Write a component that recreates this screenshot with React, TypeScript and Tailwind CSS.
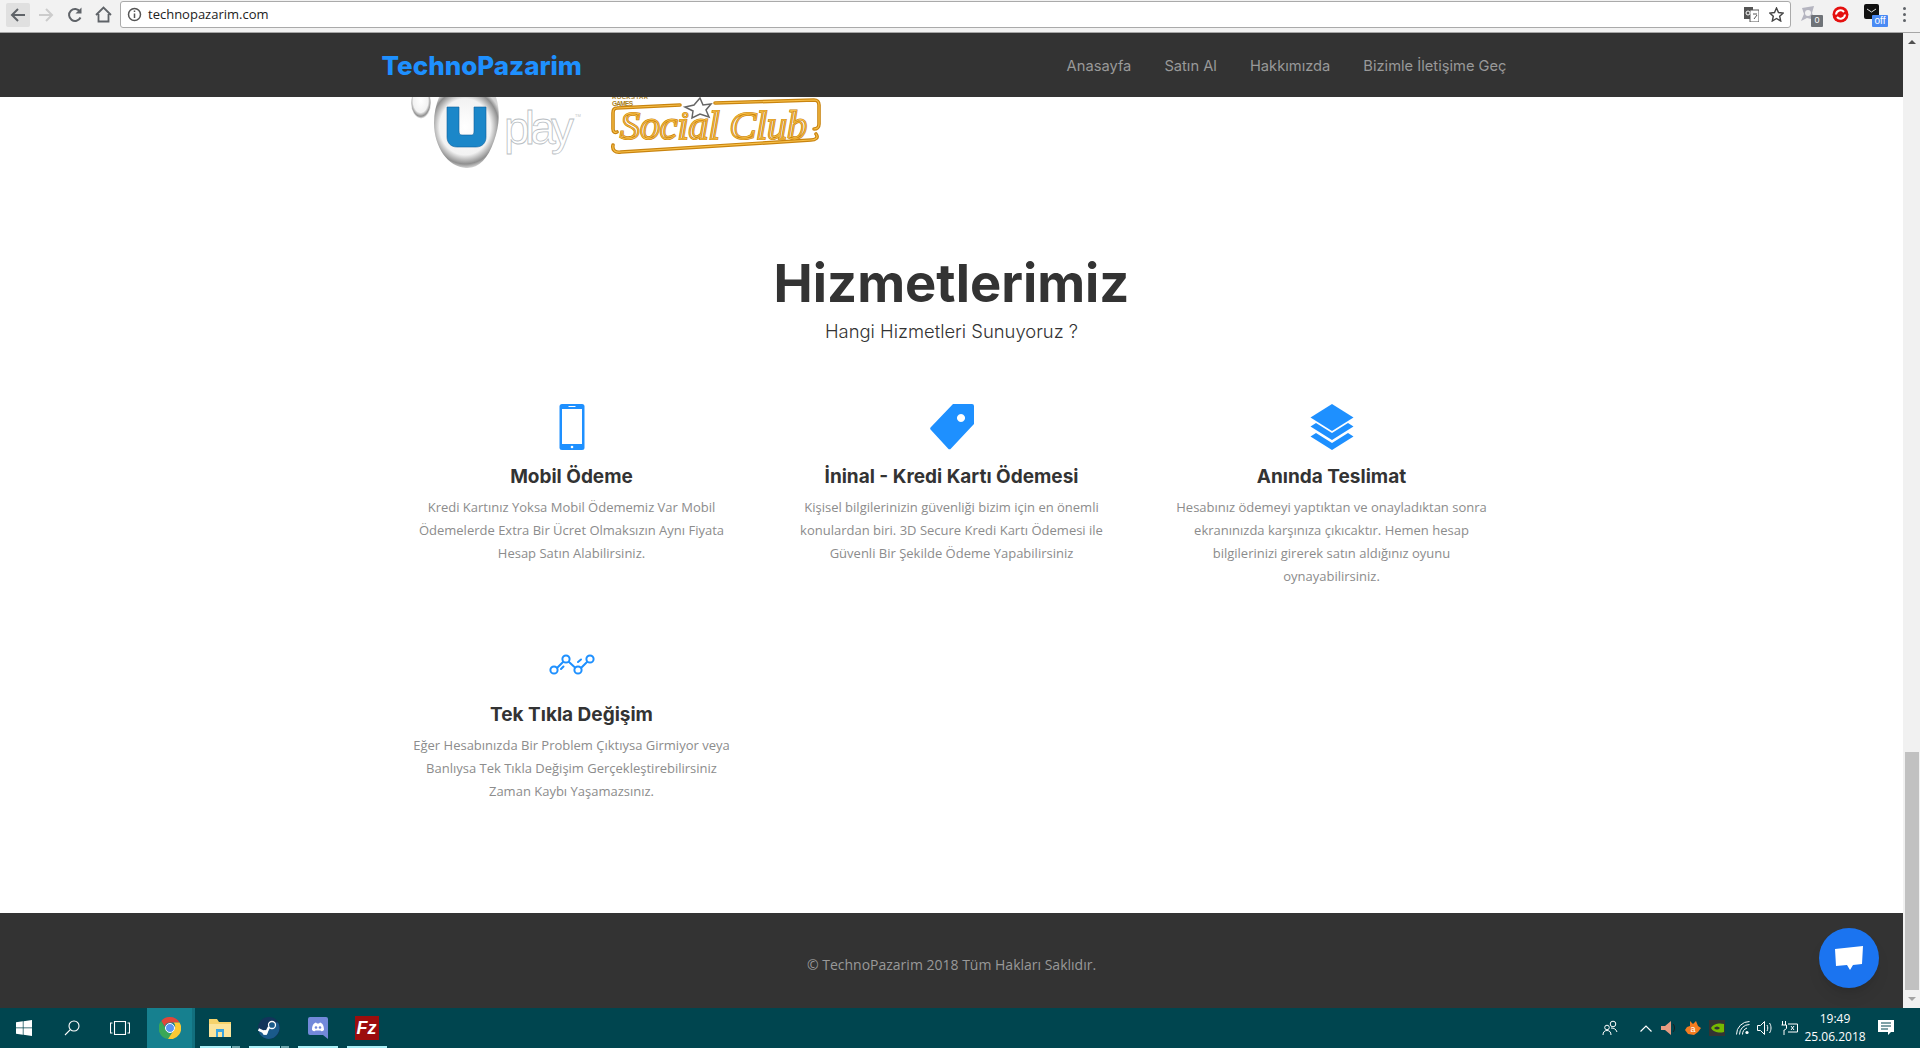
import React from 'react';

const services = [
  { title: 'Mobil Ödeme', icon: <PhoneIcon />, text: 'Kredi Kartınız Yoksa Mobil Ödememiz Var Mobil\nÖdemelerde Extra Bir Ücret Olmaksızın Aynı Fiyata\nHesap Satın Alabilirsiniz.' },
  { title: 'İninal - Kredi Kartı Ödemesi', icon: <TagIcon />, text: 'Kişisel bilgilerinizin güvenliği bizim için en önemli\nkonulardan biri. 3D Secure Kredi Kartı Ödemesi ile\nGüvenli Bir Şekilde Ödeme Yapabilirsiniz' },
  { title: 'Anında Teslimat', icon: <LayersIcon />, text: 'Hesabınız ödemeyi yaptıktan ve onayladıktan sonra\nekranınızda karşınıza çıkıcaktır. Hemen hesap\nbilgilerinizi girerek satın aldığınız oyunu\noynayabilirsiniz.' },
  { title: 'Tek Tıkla Değişim', icon: <ChartIcon />, text: 'Eğer Hesabınızda Bir Problem Çıktıysa Girmiyor veya\nBanlıysa Tek Tıkla Değişim Gerçekleştirebilirsiniz\nZaman Kaybı Yaşamazsınız.' },
];

function PhoneIcon() {
  return (
    <svg width="26" height="46" viewBox="0 0 26 46" fill="none">
      <rect x="0.5" width="25" height="46" rx="2.5" fill="#1e90ff" />
      <rect x="3" y="5" width="20" height="35" fill="#fff" />
      <rect x="9.5" y="2" width="7" height="1" fill="#fff" />
      <circle cx="13" cy="43" r="1.3" fill="#fff" />
    </svg>
  );
}

function TagIcon() {
  return (
    <svg width="44" height="46" viewBox="0 0 44 46">
      <path fillRule="evenodd" fill="#1e90ff" d="M23 0H42a2 2 0 0 1 2 2V20L21 44.500a2 2 0 0 1-3 0L1 26a2 2 0 0 1 0-3ZM31 10a4 4 0 1 0 .01 0Z" />
    </svg>
  );
}

function LayersIcon() {
  return (
    <svg width="44" height="46" viewBox="0 0 44 46" fill="#1e90ff">
      <path d="M22 0 43.500 13.500 22 27 0.500 13.500Z" />
      <path d="M6 19 22 29 38 19 43.500 22.500 22 36 0.500 22.500Z" />
      <path d="M6 29 22 39 38 29 43.500 32.500 22 46 0.500 32.500Z" />
    </svg>
  );
}

function ChartIcon() {
  return (
    <svg width="46" height="46" viewBox="0 0 46 46" fill="none" stroke="#1e90ff" strokeWidth="2">
      <circle cx="5" cy="28" r="3.600" />
      <circle cx="17" cy="17" r="3.600" />
      <circle cx="29" cy="28" r="3.600" />
      <circle cx="41" cy="17" r="3.600" />
      <path d="M8 26 14.500 19.500M19.500 19.500 26.500 26M32 26 38.500 19.500" />
      <path d="M12 27 14.500 24.500M29 20 32 17.500" strokeLinecap="round" />
    </svg>
  );
}

function UplayLogo() {
  return (
    <svg width="172" height="75" viewBox="0 0 172 75" className="shrink-0">
      <defs>
        <radialGradient id="drop" cx="48%" cy="42%" r="58%">
          <stop offset="0%" stopColor="#fff" />
          <stop offset="68%" stopColor="#f2f2f2" />
          <stop offset="90%" stopColor="#8f8f8f" />
          <stop offset="100%" stopColor="#d6d6d6" />
        </radialGradient>
      </defs>
      <ellipse cx="11" cy="6" rx="9.500" ry="15" fill="url(#drop)" stroke="#bdbdbd" strokeWidth="0.500" />
      <path d="M29 0H86C90 12 90 28 84 44 78 62 68 72 56 71 38 70 24 50 24 26 24 16 26 8 29 0Z" fill="url(#drop)" />
      <path d="M37 10H49V34C49 37 50 38 52 38H62C63 38 64 37 64 34V10H76V40C76 46 72 50 66 50H47C41 50 37 46 37 40Z" fill="#1b87c9" stroke="#0f5f9a" strokeWidth="0.600" />
      <text x="94" y="47" fontFamily="'Liberation Sans', sans-serif" fontSize="46" fill="#fff" stroke="#b9bec3" strokeWidth="0.800" textLength="70">play</text>
      <text x="165" y="20" fontFamily="'Liberation Sans', sans-serif" fontSize="4" fill="#c4c4c4">TM</text>
    </svg>
  );
}

const SOCIAL_FRAME = 'M71 8 8 11C5 11 4 13 4 16V32C4 35 6 36 8 35M106 6 205 3C208 3 210 5 210 8V27C210 30 208 32 205 32M207 37C210 41 206 43 202 43L12 55C6 56 3 53 4 48';

function SocialClubLogo() {
  return (
    <svg width="216" height="60" viewBox="0 0 216 60" className="shrink-0">
      <text x="3" y="2" fontFamily="'Liberation Sans', sans-serif" fontSize="6" fontWeight="700" fill="#a9801d" textLength="36">ROCKSTAR</text>
      <text x="3" y="9" fontFamily="'Liberation Sans', sans-serif" fontSize="6.500" fontWeight="700" fill="#a9801d" textLength="21">GAMES</text>
      <path d={SOCIAL_FRAME} fill="none" stroke="#c9840f" strokeWidth="3.600" strokeLinecap="round" />
      <path d={SOCIAL_FRAME} fill="none" stroke="#f8c04a" strokeWidth="1.200" strokeLinecap="round" />
      <text x="11" y="42" fontFamily="'Liberation Serif', serif" fontStyle="italic" fontSize="40" fill="none" stroke="#c9840f" strokeWidth="2.200" textLength="187">Social Club</text>
      <text x="11" y="42" fontFamily="'Liberation Serif', serif" fontStyle="italic" fontSize="40" fill="none" stroke="#f8c04a" strokeWidth="0.800" textLength="187">Social Club</text>
      <path d="M91 1 94 8 102 7 97 13 100 20 91 17 83 21 84 14 76 10 85 8Z" fill="#fff" stroke="#666" strokeWidth="1.500" />
    </svg>
  );
}

function ServiceCard({ title, icon, text }: { title: string; icon: React.ReactNode; text: string }) {
  return (
    <div className="flex flex-col items-center text-center">
      <div className="flex h-[46px] items-center justify-center">{icon}</div>
      <h3 className="mt-[12px] font-['Inter',sans-serif] text-[19px] leading-[30px] font-bold text-[#333]">{title}</h3>
      <p className="mt-[4px] whitespace-pre-line font-['Open_Sans',sans-serif] text-[13px] leading-[23px] text-[#8c8c8c]">{text}</p>
    </div>
  );
}

function BrowserBar() {
  return (
    <div className="flex h-[33px] shrink-0 items-center border-b border-[#a6a6a6] bg-[#f2f2f2] pb-[3px]">
      <div className="ml-[6px] flex h-[24px] w-[24px] items-center justify-center rounded-[2px] bg-[#e0e0e0]">
        <svg width="16" height="16" viewBox="0 0 16 16" fill="none" stroke="#5f6368" strokeWidth="2"><path d="M15 8H2M8 2 2 8l6 6" /></svg>
      </div>
      <div className="ml-[8px] flex w-[16px] justify-center">
        <svg width="16" height="16" viewBox="0 0 16 16" fill="none" stroke="#ccc" strokeWidth="2"><path d="M1 8h13M8 2l6 6-6 6" /></svg>
      </div>
      <div className="ml-[13px] flex w-[16px] justify-center">
        <svg width="16" height="16" viewBox="0 0 16 16" fill="none" stroke="#5f6368" strokeWidth="2"><path d="M13.500 10.500A6 6 0 1 1 13 4.500" /><path d="M14.500 0.500V6.500H8.500" fill="#5f6368" strokeWidth="0" /></svg>
      </div>
      <div className="ml-[11px] flex w-[18px] justify-center">
        <svg width="17" height="17" viewBox="0 0 17 17" fill="none" stroke="#5f6368" strokeWidth="1.800"><path d="M1 9 8.500 1.500 16 9M3.500 8V15.500H13.500V8" /></svg>
      </div>
      <div className="ml-[8px] flex h-[27px] flex-1 items-center rounded-[3px] border border-[#aaa] bg-white pl-[6px]">
        <svg width="15" height="15" viewBox="0 0 15 15" fill="none" stroke="#555" strokeWidth="1.500"><circle cx="7.500" cy="7.500" r="6" /><path d="M7.500 6.500v4.500M7.500 3.500v1.500" /></svg>
        <span className="ml-[6px] font-['Open_Sans',sans-serif] text-[13px] text-[#222]">technopazarim.com</span>
        <div className="ml-auto flex h-full items-center">
          <svg width="15" height="15" viewBox="0 0 15 15"><rect x="0" y="0" width="9" height="12" fill="#555" /><rect x="6" y="3" width="9" height="12" fill="#fff" stroke="#555" /><circle cx="4" cy="6" r="2" fill="none" stroke="#fff" /><path d="M9 7h4M10 12l3-4" stroke="#555" /></svg>
          <svg className="mx-[6px] ml-[10px]" width="15" height="15" viewBox="0 0 15 15" fill="none" stroke="#444" strokeWidth="1.400"><path d="M7.500 1 9.500 5.500 14.200 6 10.700 9.200 11.700 14 7.500 11.500 3.300 14 4.300 9.200 0.800 6 5.500 5.500Z" /></svg>
        </div>
      </div>
      <div className="relative ml-[8px] h-[24px] w-[24px]">
        <svg width="18" height="18" viewBox="0 0 18 18" className="absolute top-[2px] left-0"><path d="M3 3 15 1 13 8 16 15 8 13 2 16 5 9Z" fill="#b5b5c0" /><circle cx="9" cy="8" r="3" fill="#f2f2f2" /></svg>
        <span className="absolute right-0 bottom-0 flex h-[12px] w-[12px] items-center justify-center rounded-[1px] bg-[#6f7378] font-['Liberation_Sans',sans-serif] text-[9px] text-white">0</span>
      </div>
      <svg className="ml-[9px]" width="17" height="17" viewBox="0 0 17 17"><circle cx="8.500" cy="8.500" r="8" fill="#e5100f" /><path d="M4 8.500A4.500 4.500 0 0 1 12 6M13 8.500A4.500 4.500 0 0 1 5 11" fill="none" stroke="#fff" strokeWidth="2" /></svg>
      <div className="relative ml-[15px] h-[24px] w-[24px]">
        <div className="absolute top-[1px] left-0 flex h-[15px] w-[15px] items-center justify-center rounded-[2px] bg-[#111]">
          <svg width="11" height="7" viewBox="0 0 11 7" fill="none" stroke="#ddd"><path d="M1 1 5.500 4 10 1" /></svg>
        </div>
        <span className="absolute right-0 bottom-0 flex h-[12px] w-[16px] items-center justify-center rounded-[1px] bg-[#4a8af4] font-['Liberation_Sans',sans-serif] text-[10px] leading-none text-white">off</span>
      </div>
      <div className="mr-[9px] ml-[9px] flex w-[14px] flex-col items-center gap-[3px]">
        <span className="h-[3px] w-[3px] rounded-full bg-[#5f6368]" />
        <span className="h-[3px] w-[3px] rounded-full bg-[#5f6368]" />
        <span className="h-[3px] w-[3px] rounded-full bg-[#5f6368]" />
      </div>
    </div>
  );
}

function Scrollbar() {
  return (
    <div className="flex w-[17px] shrink-0 flex-col items-center bg-[#f1f1f1]">
      <div className="flex h-[17px] items-center justify-center">
        <div className="h-0 w-0 border-x-[4px] border-b-[4px] border-x-transparent border-b-[#505050]" />
      </div>
      <div className="flex-1" />
      <div className="h-[238px] w-[14px] bg-[#c1c1c1]" />
      <div className="flex h-[18px] items-center justify-center">
        <div className="h-0 w-0 border-x-[4px] border-t-[4px] border-x-transparent border-t-[#a3a3a3]" />
      </div>
    </div>
  );
}

function TaskItem({ stacked, children }: { stacked?: boolean; children: React.ReactNode }) {
  return (
    <div className="relative flex h-full w-[49px] items-center justify-center">
      {children}
      <div className="absolute right-[4px] bottom-0 left-[5px] flex h-[2px] gap-[1px]">
        <span className="flex-1 bg-[#a9f0f8]" />
        {stacked && <span className="w-[8px] bg-[#6fa9b0]" />}
      </div>
    </div>
  );
}

function Taskbar() {
  return (
    <div className="flex h-[40px] shrink-0 items-center bg-[#00454f]">
      <svg className="ml-[16px]" width="16" height="16" viewBox="0 0 16 16" fill="#fff"><path d="M0 2.300 6.800 1.300V7.500H0ZM7.500 1.200 16 0V7.500H7.500ZM0 8.300H6.800V14.700L0 13.700ZM7.500 8.300H16V16L7.500 14.800Z" /></svg>
      <svg className="ml-[32px]" width="16" height="16" viewBox="0 0 16 16" fill="none" stroke="#fff" strokeWidth="1.100"><circle cx="10" cy="6" r="5" /><path d="M6.300 9.700 1 15" /></svg>
      <svg className="ml-[30px]" width="20" height="14" viewBox="0 0 20 14" fill="none" stroke="#fff" strokeWidth="1.100"><rect x="4.500" y="0.500" width="11" height="13" /><path d="M2.500 2H0.500V12H2.500M17.500 2H19.500V12H17.500" /></svg>
      <div className="ml-[17px] flex h-full w-[45px] items-center justify-center bg-[#16808f]">
        <svg width="22" height="22" viewBox="0 0 22 22">
          <path d="M11 0a11 11 0 0 1 9.500 5.500H11a5.500 5.500 0 0 0-5.300 4L2.200 4A11 11 0 0 1 11 0Z" fill="#e0463a" />
          <path d="M2.200 4 7 12.500a5.500 5.500 0 0 0 5.500 3.800L9 22A11 11 0 0 1 2.200 4Z" fill="#3aa757" />
          <path d="M20.500 5.500A11 11 0 0 1 9 22l5.500-8.500a5.500 5.500 0 0 0 0-8Z" fill="#fcc934" />
          <circle cx="11" cy="11" r="4.500" fill="#5a95f5" stroke="#fff" />
        </svg>
      </div>
      <div className="h-full w-[3px] bg-[#12707e]" />
      <TaskItem stacked>
        <svg width="22" height="18" viewBox="0 0 22 18"><path d="M0 0H8L10 3H22V18H0Z" fill="#f6d36b" /><rect x="0" y="5" width="22" height="13" fill="#fce59b" /><path d="M7 10H15V18H13V13H9V18H7Z" fill="#3aa5e0" /></svg>
      </TaskItem>
      <TaskItem stacked>
        <svg width="22" height="22" viewBox="0 0 22 22"><circle cx="11" cy="11" r="11" fill="#12345a" /><path d="M0.500 13.500 7 16 10 10 13 5.500H20A11 11 0 0 1 9 21.800 11 11 0 0 1 0.500 13.500Z" fill="#1a5a8a" /><circle cx="14" cy="8" r="3.500" fill="none" stroke="#fff" strokeWidth="1.300" /><path d="M0.500 12.500 8 16 11 10" stroke="#fff" strokeWidth="2.500" fill="none" /><circle cx="7" cy="15.500" r="2.500" fill="#fff" /></svg>
      </TaskItem>
      <TaskItem>
        <svg width="20" height="22" viewBox="0 0 20 22"><path d="M2 0H18a2 2 0 0 1 2 2V22L15 18H2a2 2 0 0 1-2-2V2a2 2 0 0 1 2-2Z" fill="#7289da" /><path d="M4 13C4 8 6 6 8 5.500L9 6.500H11L12 5.500C14 6 16 8 16 13 14.500 14.500 13 14.500 12.500 13.500H7.500C7 14.500 5.500 14.500 4 13Z" fill="#fff" /><circle cx="8" cy="10.500" r="1.300" fill="#7289da" /><circle cx="12" cy="10.500" r="1.300" fill="#7289da" /></svg>
      </TaskItem>
      <TaskItem>
        <div className="flex h-[24px] w-[24px] items-center justify-center bg-[#9c0d0d] font-['Liberation_Sans',sans-serif] text-[18px] leading-none font-bold text-white italic">Fz</div>
      </TaskItem>

      <div className="ml-auto flex h-full items-center text-white">
        <svg width="16" height="16" viewBox="0 0 16 16" fill="none" stroke="#fff" strokeWidth="1"><circle cx="11" cy="4" r="2.800" /><circle cx="5" cy="7.500" r="2.300" /><path d="M1 15c0-3 1.500-4.500 4-4.500S9 12 9 15M9 8c3 0 5 1 6 4" /></svg>
        <svg className="ml-[22px]" width="12" height="7" viewBox="0 0 12 7" fill="none" stroke="#fff" strokeWidth="1.200"><path d="M0.500 6.500 6 1 11.500 6.500" /></svg>
        <svg className="ml-[9px]" width="16" height="16" viewBox="0 0 16 16"><path d="M0 6H4L10 1V15L4 10H0Z" fill="#e89c82" /><path d="M12 4C14 6 14 10 12 12" stroke="#1c1c1c" fill="none" /></svg>
        <svg className="ml-[8px]" width="16" height="15" viewBox="0 0 16 15"><path d="M5 0 8 3 11 0 13 5 16 7 13 11 9 14 3 13 0 9 2 6 5 5Z" fill="#f57c1f" /><text x="8" y="11" textAnchor="middle" fontFamily="'Liberation Sans', sans-serif" fontSize="9" fill="#fff">a</text></svg>
        <div className="ml-[8px] flex h-[16px] w-[16px] items-center justify-center bg-[#333]">
          <svg width="14" height="10" viewBox="0 0 14 10"><path d="M1 5C4 0 10 0 14 1V9C10 10 4 10 1 5Z" fill="#76b900" /><path d="M4 5C6 3 8 3 10 5 8 7 6 7 4 5Z" fill="#333" /></svg>
        </div>
        <svg className="ml-[11px]" width="14" height="14" viewBox="0 0 14 14" fill="none" stroke="#fff" strokeWidth="1"><path d="M0.500 13.500A13 13 0 0 1 13.500 0.500M3.500 13.500A10 10 0 0 1 13.500 3.500M6.500 13.500A7 7 0 0 1 11 7" /><circle cx="11" cy="11.500" r="1.600" fill="#fff" stroke="none" /></svg>
        <svg className="ml-[7px]" width="16" height="16" viewBox="0 0 16 16" fill="none" stroke="#fff" strokeWidth="1"><path d="M0.500 5.500H3.500L7.500 1.500V14.500L3.500 10.500H0.500ZM10 5C11 6.500 11 9.500 10 11M12.500 3C14.500 6 14.500 10 12.500 13" /></svg>
        <svg className="ml-[8px]" width="17" height="14" viewBox="0 0 17 14" fill="none" stroke="#fff" strokeWidth="1"><path d="M1.500 0V4M4.500 0V4M0.500 4H5.500V7C5.500 8 4 9 3 9V14M7 3H16.500V11H7M10 5l3 4M13 5l-3 4" /></svg>
        <div className="ml-[7px] flex w-[60px] flex-col items-center font-['Open_Sans',sans-serif] text-[12px] leading-[18px]">
          <span>19:49</span>
          <span>25.06.2018</span>
        </div>
        <svg className="mr-[25px] ml-[13px]" width="17" height="16" viewBox="0 0 17 16"><path d="M0 0H16V12H13L10 15V12H0Z" fill="#fff" /><path d="M3 3H13M3 6H13M3 9H10" stroke="#00454f" /></svg>
      </div>
    </div>
  );
}

export default function App() {
  return (
    <div className="flex h-[1048px] w-[1920px] flex-col overflow-hidden bg-white">
      <BrowserBar />
      <div className="flex min-h-0 flex-1">
        <div className="relative flex min-w-0 flex-1 flex-col">
          <header className="relative z-10 h-[64px] shrink-0 bg-[#333]">
            <div className="mx-auto flex h-full w-[1140px] items-center justify-between">
              <a className="font-['Inter',sans-serif] text-[26px] font-extrabold text-[#1e90ff]">TechnoPazarim</a>
              <nav className="mr-[15px] flex items-center gap-[33px] pt-[2px] font-['Inter',sans-serif] text-[14.700px] text-[#999]">
                <a>Anasayfa</a>
                <a>Satın Al</a>
                <a>Hakkımızda</a>
                <a>Bizimle İletişime Geç</a>
              </nav>
            </div>
          </header>

          <main className="mx-auto flex w-[1140px] flex-1 flex-col">
            <div className="flex h-[75px] items-start gap-[27px] pl-[28px]">
              <UplayLogo />
              <SocialClubLogo />
            </div>
            <div className="mt-[79px] text-center">
              <h2 className="font-['Inter',sans-serif] text-[52.500px] leading-[64px] font-bold text-[#333]">Hizmetlerimiz</h2>
              <p className="mt-[1px] font-['Inter',sans-serif] text-[18.400px] leading-[30px] font-light text-[#333]">Hangi Hizmetleri Sunuyoruz ?</p>
            </div>
            <div className="mt-[58px] grid grid-cols-3 gap-y-[54px]">
              {services.map(service => (
                <ServiceCard key={service.title} {...service} />
              ))}
            </div>
          </main>

          <footer className="flex h-[95px] shrink-0 items-center justify-center bg-[#333] pt-[8px] font-['Open_Sans',sans-serif] text-[14px] text-[#999]">
            © TechnoPazarim 2018 Tüm Hakları Saklıdır.
          </footer>

          <div className="absolute right-[24px] bottom-[20px] flex h-[60px] w-[60px] items-center justify-center rounded-full bg-[#1b74f0] shadow-lg">
            <svg width="30" height="25" viewBox="0 0 30 25" fill="#fff"><path d="M1 3 29 0 28 18 19 19 16 24 13 19 2 20Z" /></svg>
          </div>
        </div>
        <Scrollbar />
      </div>
      <Taskbar />
    </div>
  );
}
